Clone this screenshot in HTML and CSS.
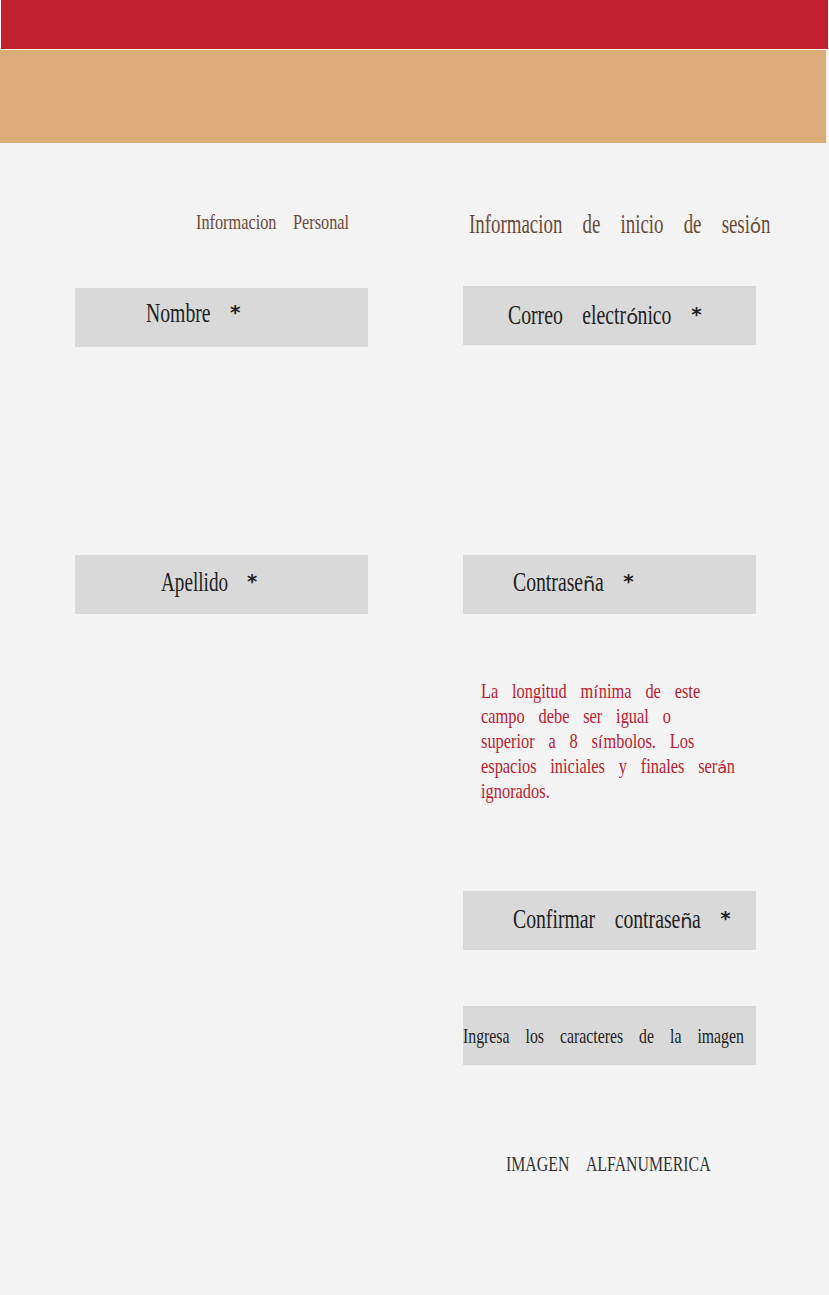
FILE: index.html
```html
<!DOCTYPE html>
<html lang="es">
<head>
<meta charset="utf-8">
<title>Registro</title>
<link rel="stylesheet" href="styles.css">
</head>
<body>
<header class="topbar"></header>
<div class="band"></div>
<main class="form">
  <section class="col col-left">
    <h2 class="heading heading-left"><span class="sx sx-hl">Informacion Personal</span></h2>
    <div class="field field-nombre"><span class="sx sx-label">Nombre <span class="ast">*</span></span></div>
    <div class="field field-apellido"><span class="sx sx-label sx-apellido">Apellido <span class="ast">*</span></span></div>
  </section>
  <section class="col col-right">
    <h2 class="heading heading-right"><span class="sx sx-hr">Informacion de inicio de sesi<span class="fb">ó</span>n</span></h2>
    <div class="field field-correo"><span class="sx sx-label">Correo electr<span class="fb">ó</span>nico <span class="ast">*</span></span></div>
    <div class="field field-pass"><span class="sx sx-label">Contrase<span class="fb">ñ</span>a <span class="ast">*</span></span></div>
    <p class="hint"><span class="sx sx-hint">La longitud m<span class="fb">í</span>nima de este<br>campo debe ser igual o<br>superior a 8 s<span class="fb">í</span>mbolos. Los<br>espacios iniciales y finales ser<span class="fb">á</span>n<br>ignorados.</span></p>
    <div class="field field-confirm"><span class="sx sx-label">Confirmar contrase<span class="fb">ñ</span>a <span class="ast">*</span></span></div>
    <div class="field field-captcha"><span class="sx sx-captcha">Ingresa los caracteres de la imagen</span></div>
    <div class="captcha-img"><span class="sx sx-img">IMAGEN ALFANUMERICA</span></div>
  </section>
</main>
</body>
</html>
```
FILE: styles.css
```css
html, body {
  margin: 0;
  padding: 0;
}
body {
  width: 829px;
  min-height: 1295px;
  background: #f4f4f4;
  font-family: "Liberation Serif", "Times New Roman", serif;
}
.topbar {
  display: block;
  width: 827px;
  height: 49px;
  margin-left: 1px;
  background: #be202f;
  border-bottom: 1px solid #ffffff;
}
.band {
  width: 826px;
  height: 93px;
  background: #d9ac78;
}
.form {
  display: grid;
  grid-template-columns: 293px 293px;
  column-gap: 95px;
  padding-left: 75px;
  padding-top: 68px;
  overflow: clip;
}
.col {
  display: flex;
  flex-direction: column;
  align-items: stretch;
  min-width: 0;
}
.sx {
  display: inline-block;
  transform-origin: 0 0;
  white-space: nowrap;
}
.fb {
  display: inline-block;
  font-family: "DejaVu Sans", sans-serif;
  font-size: 0.72em;
  line-height: 1;
  transform: scaleX(1.37);
  transform-origin: 0 0;
  margin-right: 0.2em;
}
.ast {
  display: inline-block;
  font-family: "DejaVu Sans", sans-serif;
  font-weight: bold;
  font-size: 20px;
  line-height: 20px;
  transform: scaleX(1.37);
  transform-origin: 0 0;
  vertical-align: 3px;
}
.heading {
  margin: 0;
  font-weight: normal;
  color: #6a4a38;
  white-space: nowrap;
}
.heading-left {
  height: 22px;
  font-size: 22px;
  line-height: 22px;
  padding-left: 121px;
}
.heading-right {
  height: 27px;
  font-size: 27px;
  line-height: 27px;
  padding-left: 6px;
}
.sx-hl {
  transform: scaleX(0.74);
  word-spacing: 16.8px;
}
.sx-hr {
  transform: scaleX(0.70);
  word-spacing: 22px;
}
.field {
  width: 293px;
  height: 59px;
  box-sizing: border-box;
  background: #d9d9d9;
  color: #222222;
  font-size: 27px;
  line-height: 27px;
  white-space: nowrap;
}
.sx-label {
  transform: scaleX(0.73);
  word-spacing: 20px;
}
.sx-apellido {
  transform: scaleX(0.71);
}
.field-nombre {
  margin-top: 55px;
  padding: 12px 0 0 71px;
}
.field-apellido {
  margin-top: 208px;
  padding: 14px 0 0 86px;
}
.field-correo {
  margin-top: 48px;
  padding: 16px 0 0 45px;
}
.field-pass {
  margin-top: 210px;
  padding: 14px 0 0 50px;
}
.hint {
  height: 125px;
  margin: 64px 0 0 0;
  padding-left: 18px;
  font-size: 22px;
  line-height: 25px;
  color: #be202f;
}
.sx-hint {
  transform: scaleX(0.745);
  word-spacing: 13px;
}
.field-confirm {
  margin-top: 88px;
  padding: 15px 0 0 50px;
}
.field-captcha {
  margin-top: 56px;
  padding: 19px 0 0 0;
  font-size: 22px;
  line-height: 22px;
}
.sx-captcha {
  transform: scaleX(0.718);
  word-spacing: 16.8px;
}
.captcha-img {
  height: 22px;
  margin-top: 88px;
  padding-left: 43px;
  font-size: 22px;
  line-height: 22px;
  color: #333333;
}
.sx-img {
  transform: scaleX(0.72);
  word-spacing: 18.7px;
}
```
